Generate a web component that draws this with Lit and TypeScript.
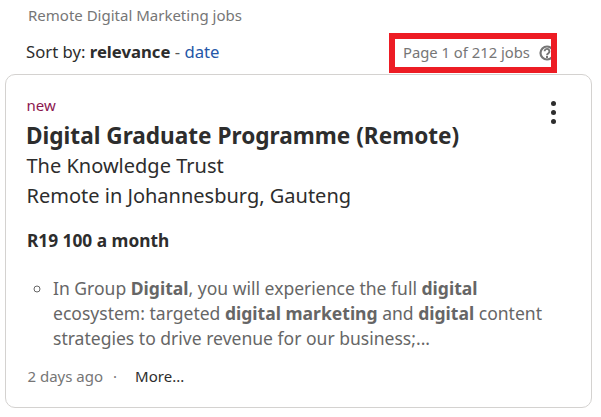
import { LitElement, html, css } from "lit";
import { customElement } from "lit/decorators.js";

@customElement("app-root")
export class AppRoot extends LitElement {
  static styles = css`
    :host { display: block; width: 601px; height: 417px; overflow: hidden; background: #fff; font-family: "Noto Sans", sans-serif; color: #2d2d2d; box-sizing: border-box; padding: 5px 9px 0 5px; }
    .query { font-size: 15px; line-height: 20px; color: #767676; margin-left: 23px; }
    .bar { display: flex; justify-content: space-between; align-items: center; height: 42px; margin-top: 7px; margin-left: 21px; margin-right: 35px; }
    .sort { font-size: 16.7px; line-height: 20px; margin-top: -2px; }
    .sort b { font-weight: 700; }
    .sort .dash { color: #595959; }
    .sort a { color: #2557a7; }
    .count { box-sizing: border-box; width: 168px; height: 40px; border: 6px solid #ed1c24; display: flex; align-items: center; padding-left: 8px; gap: 9px; font-size: 14.8px; color: #767676; overflow: hidden; white-space: nowrap; }
    .count span { margin-top: -2px; }
    .help { width: 16px; height: 16px; flex: none; margin-top: -1px; }
    .card { position: relative; box-sizing: border-box; height: 334px; border: 1px solid #d4d2d0; border-radius: 10px; padding: 21px 21px 0; }
    .new { font-size: 15px; line-height: 18px; color: #8c1750; margin-left: -0.5px; }
    h2 { margin: 7px 0 0 -1px; font-size: 22.6px; line-height: 30px; font-weight: 700; color: #2d2d2d; white-space: nowrap; }
    .line { font-size: 20px; line-height: 30px; color: #2d2d2d; margin-left: -0.5px; }
    .salary { margin-top: 18px; font-size: 17.3px; line-height: 24px; font-weight: 700; color: #2d2d2d; }
    ul { margin: 23px 0 0; padding: 0 0 0 26px; list-style: circle; color: #666; font-size: 17.55px; line-height: 25px; }
    li b { font-weight: 700; }
    .foot { display: flex; align-items: center; margin: 15px 0 0 0.5px; font-size: 15px; line-height: 20px; color: #767676; }
    .dot { margin: 0 18px 0 10px; }
    .more { color: #2d2d2d; }
    .menu { position: absolute; right: 35px; top: 26px; width: 5px; height: 23px; display: flex; flex-direction: column; justify-content: space-between; }
    .menu span { width: 5px; height: 5px; border-radius: 50%; background: #2d2d2d; }
  `;
  render() {
    return html`
      <div class="query">Remote Digital Marketing jobs</div>
      <div class="bar">
        <div class="sort">Sort by: <b>relevance</b> <span class="dash">-</span> <a>date</a></div>
        <div class="count">
          <span>Page 1 of 212 jobs</span>
          <svg class="help" viewBox="0 0 16 16" fill="none">
            <circle cx="8" cy="8" r="6.5" stroke="#767676" stroke-width="2.2"/>
            <path d="M5.6 6.3a2.4 2.4 0 1 1 3.7 2c-.9.5-1.3.9-1.3 1.9" stroke="#767676" stroke-width="1.9"/>
            <rect x="7" y="11" width="2" height="2" fill="#767676"/>
          </svg>
        </div>
      </div>
      <div class="card">
        <div class="new">new</div>
        <h2>Digital Graduate Programme (Remote)</h2>
        <div class="line">The Knowledge Trust</div>
        <div class="line">Remote in Johannesburg, Gauteng</div>
        <div class="salary">R19 100 a month</div>
        <ul><li>In Group <b>Digital</b>, you will experience the full <b>digital</b> ecosystem: targeted <b>digital marketing</b> and <b>digital</b> content strategies to drive revenue for our business;...</li></ul>
        <div class="foot"><span>2 days ago</span><span class="dot">·</span><span class="more">More...</span></div>
        <div class="menu"><span></span><span></span><span></span></div>
      </div>
    `;
  }
}
